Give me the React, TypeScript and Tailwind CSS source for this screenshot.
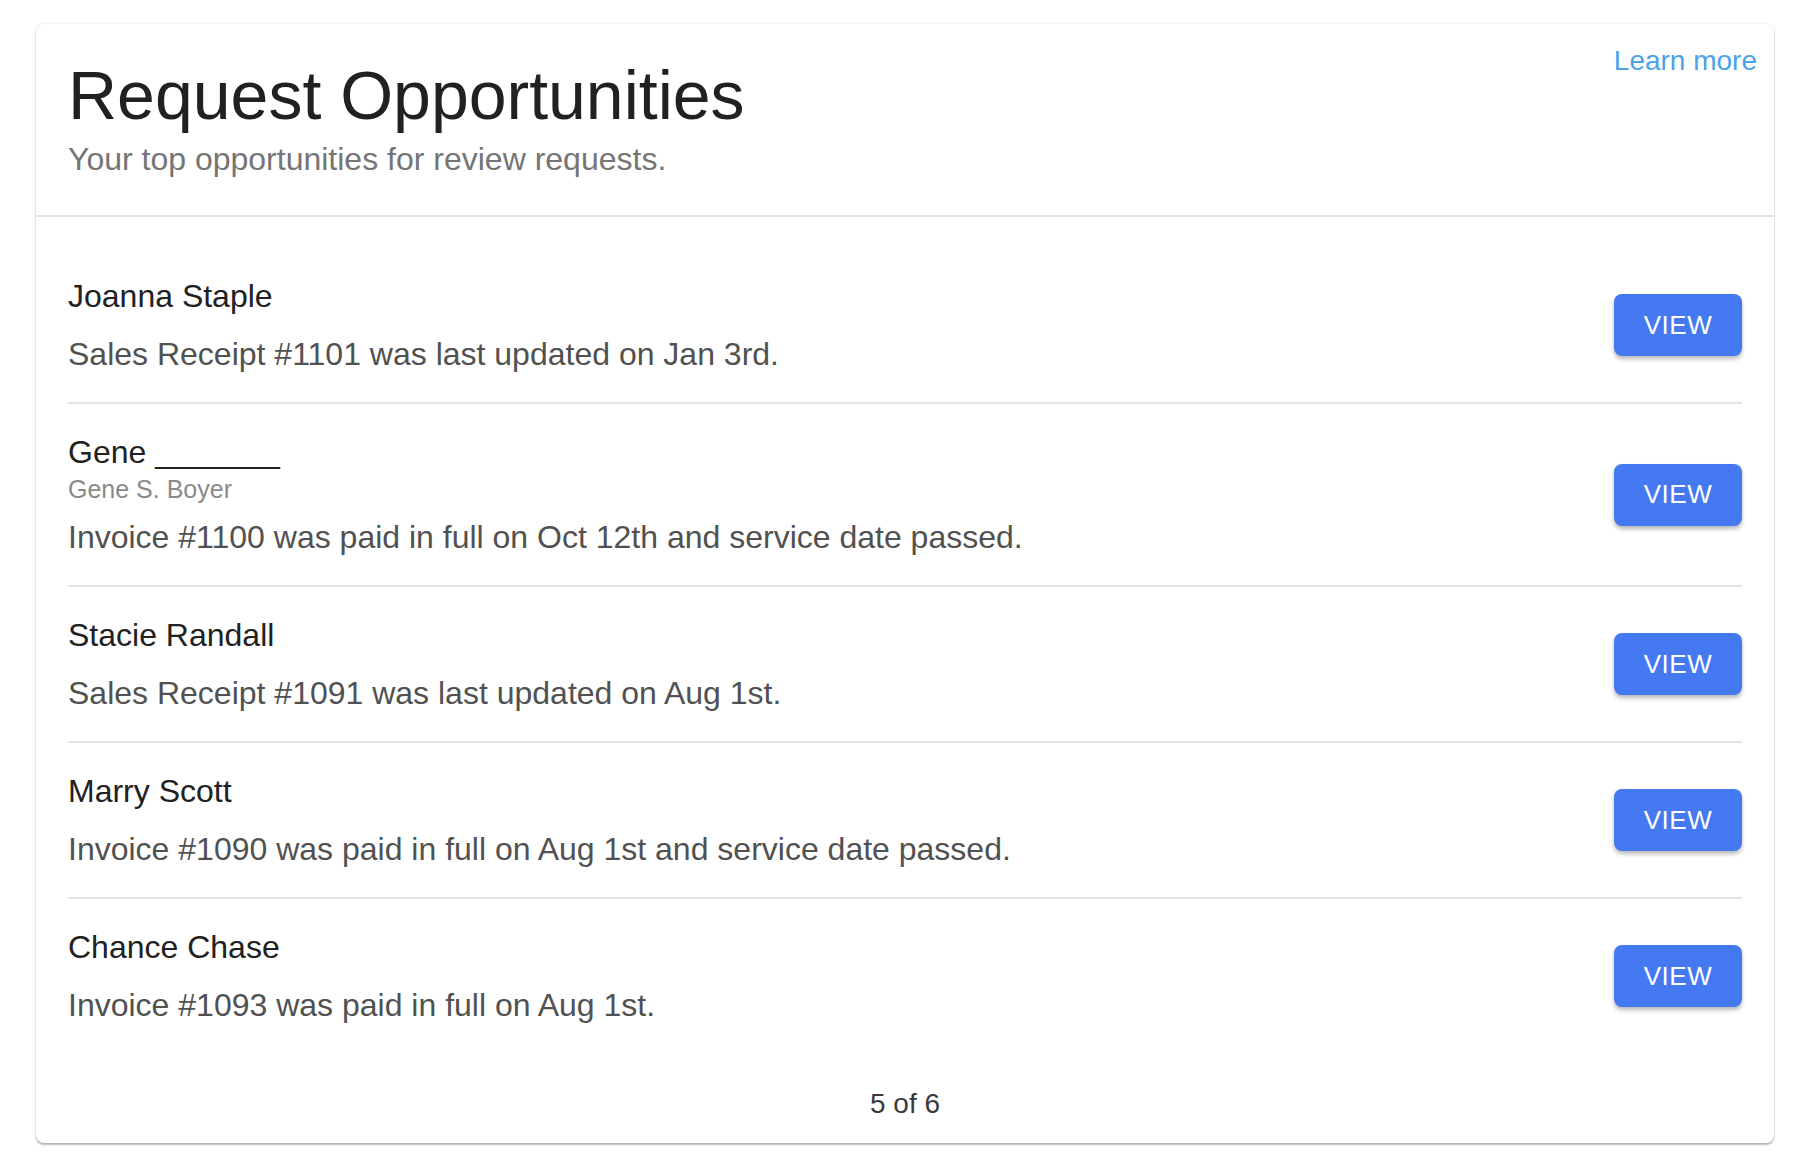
type Opportunity = {
  id: number;
  name: string;
  altName?: string;
  detail: string;
};

const opportunities: Opportunity[] = [
  { id: 1101, name: 'Joanna Staple', detail: 'Sales Receipt #1101 was last updated on Jan 3rd.' },
  {
    id: 1100,
    name: 'Gene _______',
    altName: 'Gene S. Boyer',
    detail: 'Invoice #1100 was paid in full on Oct 12th and service date passed.',
  },
  { id: 1091, name: 'Stacie Randall', detail: 'Sales Receipt #1091 was last updated on Aug 1st.' },
  { id: 1090, name: 'Marry Scott', detail: 'Invoice #1090 was paid in full on Aug 1st and service date passed.' },
  { id: 1093, name: 'Chance Chase', detail: 'Invoice #1093 was paid in full on Aug 1st.' },
];

export default function App() {
  return (
    <main className="min-h-screen bg-white pt-[24px] pl-[36px] pr-[38px] font-['Liberation_Sans',Arial,sans-serif]">
      <div className="w-full rounded-[8px] bg-white shadow-[0_2px_2px_rgba(0,0,0,0.28),0_0_2px_rgba(0,0,0,0.14)]">
        {/* header */}
        <div className="flex items-start justify-between border-b-2 border-[#e2e2e2] pl-[32px] pr-[17px] pt-[23px] pb-[36px]">
          <div className="mt-[14px]">
            <h1 className="text-[68px] leading-[68px] text-[#212121]">Request Opportunities</h1>
            <p className="mt-[10px] text-[32px] leading-[40px] text-[#757575]">
              Your top opportunities for review requests.
            </p>
          </div>
          <a href="#" className="text-[28px] leading-[28px] text-[#4aa3ea]">
            Learn more
          </a>
        </div>

        {/* list */}
        <div className="px-[32px] pt-[31px]">
          {opportunities.map((item, i) => (
            <div
              key={item.id}
              className={
                i < opportunities.length - 1
                  ? 'flex items-center justify-between border-b-2 border-[#e3e3e3] py-[28px]'
                  : 'flex items-center justify-between py-[28px]'
              }
            >
              <div>
                <p className="text-[32px] leading-[40px] text-[#212121]">{item.name}</p>
                {item.altName && (
                  <p className="mt-[2px] text-[25px] leading-[30px] text-[#8a8a8a]">{item.altName}</p>
                )}
                <p
                  className={
                    item.altName
                      ? 'mt-[13px] text-[32px] leading-[40px] text-[#515151]'
                      : 'mt-[18px] text-[32px] leading-[40px] text-[#515151]'
                  }
                >
                  {item.detail}
                </p>
              </div>
              <button className="flex h-[62px] w-[128px] items-center justify-center rounded-[8px] bg-[#4479f2] text-[26px] tracking-[0.5px] text-white shadow-[0_3px_4px_rgba(0,0,0,0.28)]">
                VIEW
              </button>
            </div>
          ))}
        </div>

        {/* footer */}
        <div className="pt-[37px] pb-[25px] text-center text-[28px] leading-[28px] text-[#3a3a3a]">5 of 6</div>
      </div>
    </main>
  );
}
